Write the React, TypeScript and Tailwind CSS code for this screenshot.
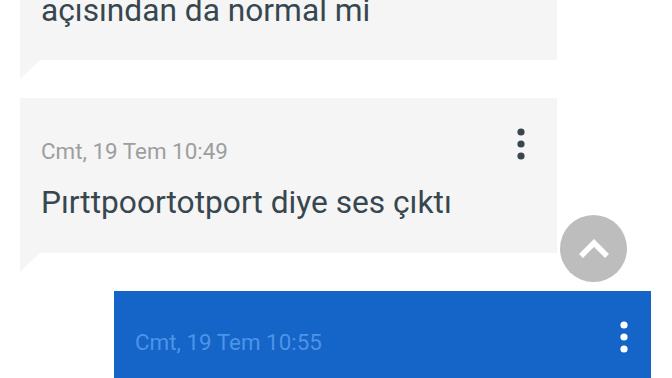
import React from "react";

interface BubbleProps {
  time: string;
  text?: string;
  mine?: boolean;
  bottomPad?: string;
}

function Kebab({ color }: { color: string }) {
  return (
    <svg width="8" height="32" viewBox="0 0 8 32" className="shrink-0">
      <circle cx="4" cy="4" r="3.6" fill={color} />
      <circle cx="4" cy="16" r="3.6" fill={color} />
      <circle cx="4" cy="28" r="3.6" fill={color} />
    </svg>
  );
}

function Bubble({ time, text, mine = false, bottomPad = "pb-[31px]" }: BubbleProps) {
  const boxClass = mine ? "bg-[#1565c8] pr-[23px]" : "bg-[#f5f5f5] pr-[32px]";

  return (
    <div className={`w-[537px] flex flex-col ${mine ? "self-end" : "self-start"}`}>
      <div className={`${boxClass} pl-[21px] ${bottomPad}`}>
        {/* Header */}
        <div className="flex items-start justify-between pt-[30px]">
          <span
            className={`text-[22.4px] leading-[26px] ${
              mine ? "mt-[8px] text-[#4d93e6]" : "mt-[10px] text-[#9e9e9e]"
            }`}
          >
            {time}
          </span>
          <Kebab color={mine ? "#ffffff" : "#37474f"} />
        </div>

        {/* Body */}
        {text && (
          <div className="mt-[20px] text-[31.7px] leading-[38px] text-[#37474f]">
            {text}
          </div>
        )}
      </div>

      {/* Tail */}
      {!mine && (
        <div className="w-[20px] h-[19px] bg-[#f5f5f5] [clip-path:polygon(0_0,100%_0,0_100%)]" />
      )}
    </div>
  );
}

export default function App() {
  return (
    <div
      className="relative w-[672px] h-[378px] overflow-hidden bg-white"
      style={{ fontFamily: "Roboto, 'Noto Sans', sans-serif" }}
    >
      <div className="flex flex-col px-[20px] -mt-[94px]">
        <Bubble
          time="Cmt, 19 Tem 10:41"
          text="açısından da normal mi"
          bottomPad="pb-[30px]"
        />
        <div className="h-[19px]" />
        <Bubble time="Cmt, 19 Tem 10:49" text="Pırttpoortotport diye ses çıktı" />
        <div className="h-[19px]" />
        <div className="pr-[1px] flex flex-col">
          <Bubble time="Cmt, 19 Tem 10:55" mine bottomPad="pb-[40px]" />
        </div>
      </div>

      {/* Scroll to top */}
      <button className="absolute left-[560px] top-[215px] w-[67px] h-[67px] rounded-full bg-[#bdbdbd] flex items-center justify-center">
        <svg width="34" height="22" viewBox="0 0 34 22">
          <path
            d="M4 18 L17 5 L30 18"
            fill="none"
            stroke="#ffffff"
            strokeWidth="5.5"
          />
        </svg>
      </button>
    </div>
  );
}
